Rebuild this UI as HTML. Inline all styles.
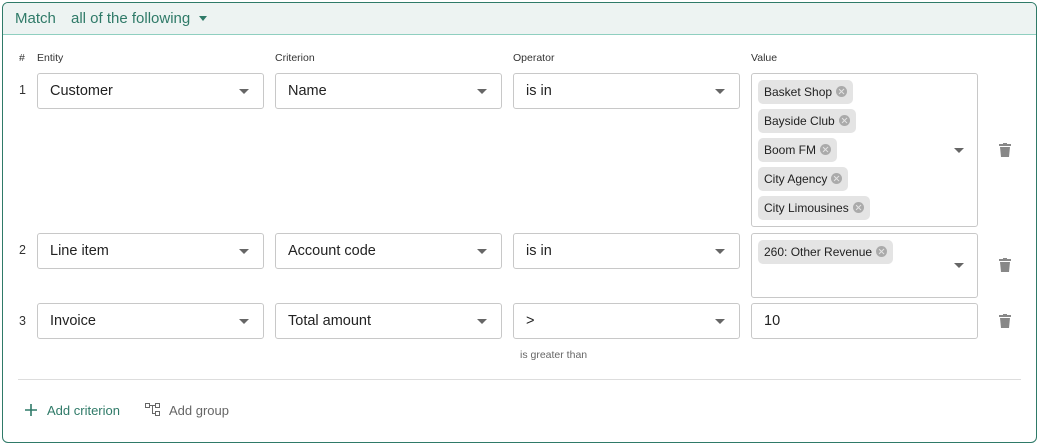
<!DOCTYPE html>
<html><head><style>
*{box-sizing:border-box;margin:0;padding:0}
body{width:1040px;height:446px;background:#fff;font-family:"Liberation Sans",sans-serif;position:relative;overflow:hidden;color:#222}
.outer{position:absolute;left:2px;top:2px;width:1035px;height:441px;border:1.5px solid #2f7a68;border-radius:6px;overflow:hidden}
.hdr{position:absolute;left:0;top:0;right:0;height:32px;background:#edf3f2;border-bottom:1px solid #8fcfc0}
.hdr span{position:absolute;top:7px;font-size:15px;color:#2f7a68}
.a{position:absolute}
.lbl{font-size:10.5px;color:#333;top:52px}
.sel{position:absolute;height:36px;width:227px;border:1px solid #c8c8c8;border-radius:3px;font-size:14.5px;padding:9px 12px;color:#222}
.dd:after{content:"";position:absolute;right:14px;top:15px;border-left:5px solid transparent;border-right:5px solid transparent;border-top:5px solid #666}
.num{position:absolute;left:19px;font-size:12.5px;color:#333}
.chip{position:absolute;height:24px;background:#e4e4e4;border-radius:5px;font-size:12px;padding:5px 6px;color:#222;white-space:nowrap}
.chip i{display:inline-block;width:11px;height:11px;border-radius:50%;background:#aaa;vertical-align:-1px;margin-left:4px;position:relative}
.chip i:before,.chip i:after{content:"";position:absolute;left:5px;top:2px;width:1.3px;height:7px;background:#e4e4e4;transform:rotate(45deg)}
.chip i:after{transform:rotate(-45deg)}
.trash{position:absolute;left:999px;width:12px;height:14px}
</style></head><body>
<div class="outer">
<div class="hdr"><span style="left:12px">Match</span><span style="left:68px">all of the following</span>
<div class="a" style="left:196px;top:13px;border-left:4px solid transparent;border-right:4px solid transparent;border-top:5px solid #2f7a68"></div></div>
</div>
<div class="a lbl" style="left:19px">#</div>
<div class="a lbl" style="left:37px">Entity</div>
<div class="a lbl" style="left:275px">Criterion</div>
<div class="a lbl" style="left:513px">Operator</div>
<div class="a lbl" style="left:751px">Value</div>

<div class="num" style="top:83px">1</div>
<div class="sel dd" style="left:37px;top:73px">Customer</div>
<div class="sel dd" style="left:275px;top:73px">Name</div>
<div class="sel dd" style="left:513px;top:73px">is in</div>
<div class="sel" style="left:751px;top:73px;height:154px">
<div class="chip" style="top:6px;left:6px">Basket Shop<i></i></div>
<div class="chip" style="top:35px;left:6px">Bayside Club<i></i></div>
<div class="chip" style="top:64px;left:6px">Boom FM<i></i></div>
<div class="chip" style="top:93px;left:6px">City Agency<i></i></div>
<div class="chip" style="top:122px;left:6px">City Limousines<i></i></div>
</div>
<div class="a" style="left:954px;top:148px;border-left:5px solid transparent;border-right:5px solid transparent;border-top:5px solid #666"></div>

<div class="num" style="top:243px">2</div>
<div class="sel dd" style="left:37px;top:233px">Line item</div>
<div class="sel dd" style="left:275px;top:233px">Account code</div>
<div class="sel dd" style="left:513px;top:233px">is in</div>
<div class="sel" style="left:751px;top:233px;height:65px">
<div class="chip" style="top:6px;left:6px">260: Other Revenue<i></i></div>
</div>
<div class="a" style="left:954px;top:263px;border-left:5px solid transparent;border-right:5px solid transparent;border-top:5px solid #666"></div>

<div class="num" style="top:314px">3</div>
<div class="sel dd" style="left:37px;top:303px">Invoice</div>
<div class="sel dd" style="left:275px;top:303px">Total amount</div>
<div class="sel dd" style="left:513px;top:303px">&gt;</div>
<div class="sel" style="left:751px;top:303px">10</div>
<div class="a" style="left:520px;top:349px;font-size:10.5px;color:#666">is greater than</div>

<svg class="trash" style="top:143px" viewBox="0 0 12 14"><rect x="0" y="1" width="12" height="2" fill="#888"/><rect x="4" y="0" width="4" height="2" fill="#888"/><path d="M1 4h10l-1 10H2z" fill="#888"/></svg>
<svg class="trash" style="top:258px" viewBox="0 0 12 14"><rect x="0" y="1" width="12" height="2" fill="#888"/><rect x="4" y="0" width="4" height="2" fill="#888"/><path d="M1 4h10l-1 10H2z" fill="#888"/></svg>
<svg class="trash" style="top:314px" viewBox="0 0 12 14"><rect x="0" y="1" width="12" height="2" fill="#888"/><rect x="4" y="0" width="4" height="2" fill="#888"/><path d="M1 4h10l-1 10H2z" fill="#888"/></svg>

<div class="a" style="left:18px;top:379px;width:1003px;height:1px;background:#ddd"></div>
<svg class="a" style="left:25px;top:404px" width="12" height="12"><path d="M6 0v12M0 6h12" stroke="#2f7a68" stroke-width="1.6"/></svg>
<div class="a" style="left:47px;top:403px;font-size:13px;color:#2f7a68">Add criterion</div>
<svg class="a" style="left:145px;top:403px" width="16" height="14" fill="none" stroke="#666" stroke-width="1"><rect x="0.5" y="0.5" width="4" height="4"/><rect x="10.5" y="0.5" width="4" height="4"/><rect x="10.5" y="8.5" width="4" height="4"/><path d="M4.5 2.5h6M7.5 2.5v8h3"/></svg>
<div class="a" style="left:169px;top:403px;font-size:13px;color:#666">Add group</div>
</body></html>
